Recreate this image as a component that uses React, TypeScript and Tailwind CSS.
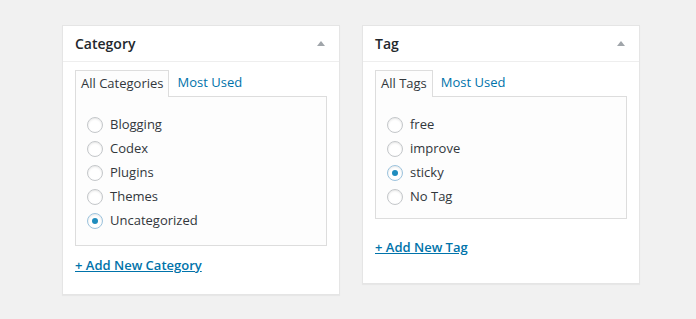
import React from "react";

type Item = { label: string; checked?: boolean };

const Radio = ({ checked }: { checked?: boolean }) => (
  <span
    className={
      "flex h-[16px] w-[16px] items-center justify-center rounded-full border bg-white shadow-[inset_0_1px_2px_rgba(0,0,0,0.1)] " +
      (checked
        ? "border-[#9cc3dd] shadow-[0_0_2px_rgba(30,140,190,0.6)]"
        : "border-[#c4c7ca]")
    }
  >
    {checked && <span className="h-[6px] w-[6px] rounded-full bg-[#1e8cbe]" />}
  </span>
);

const Box = ({
  title,
  tab,
  items,
  link,
  boxPad,
  linkTop,
  bottom,
}: {
  title: string;
  tab: string;
  items: Item[];
  link: string;
  boxPad: string;
  linkTop: string;
  bottom: string;
}) => (
  <div className="w-[278px] border border-[#e5e5e5] bg-white shadow-[0_1px_1px_rgba(0,0,0,0.04)]">
    <div className="flex h-[36px] items-center justify-between border-b border-[#eeeeee] pl-3 pr-[14px]">
      <h3 className="text-[14px] font-semibold text-[#23282d]">{title}</h3>
      <svg width="8" height="5" viewBox="0 0 8 5">
        <path d="M4 0L8 5H0z" fill="#a0a5aa" />
      </svg>
    </div>
    <div className={"px-3 pt-[8px] " + bottom}>
      <div className="flex text-[13px]">
        <span className="relative z-10 -mb-px flex h-[27px] items-center border border-b-0 border-[#dddddd] bg-[#fdfdfd] px-[5px] text-[#32373c]">
          {tab}
        </span>
        <span className="flex h-[26px] items-center px-[8px] text-[#0073aa]">
          Most Used
        </span>
      </div>
      <div className={"border border-[#dddddd] bg-[#fdfdfd] pl-[11px] pt-[16px] " + boxPad}>
        {items.map((it) => (
          <label key={it.label} className="flex h-[24px] items-center gap-[7px] text-[13px] text-[#32373c]">
            <Radio checked={it.checked} />
            {it.label}
          </label>
        ))}
      </div>
      <a
        href="#"
        className={"block text-[13px] font-semibold leading-[18px] text-[#0073aa] underline " + linkTop}
      >
        {link}
      </a>
    </div>
  </div>
);

export default function App() {
  return (
    <div
      className="flex h-[319px] items-start gap-[22px] bg-[#f1f1f1] pl-[62px] pt-[25px]"
      style={{ fontFamily: '"Open Sans", "Noto Sans", sans-serif' }}
    >
      <Box
        title="Category"
        tab="All Categories"
        items={[
          { label: "Blogging" },
          { label: "Codex" },
          { label: "Plugins" },
          { label: "Themes" },
          { label: "Uncategorized", checked: true },
        ]}
        link="+ Add New Category"
        boxPad="pb-[12px]"
        linkTop="mt-[10px]"
        bottom="pb-[20px]"
      />
      <Box
        title="Tag"
        tab="All Tags"
        items={[
          { label: "free" },
          { label: "improve" },
          { label: "sticky", checked: true },
          { label: "No Tag" },
        ]}
        link="+ Add New Tag"
        boxPad="pb-[9px]"
        linkTop="mt-[19px]"
        bottom="pb-[27px]"
      />
    </div>
  );
}
